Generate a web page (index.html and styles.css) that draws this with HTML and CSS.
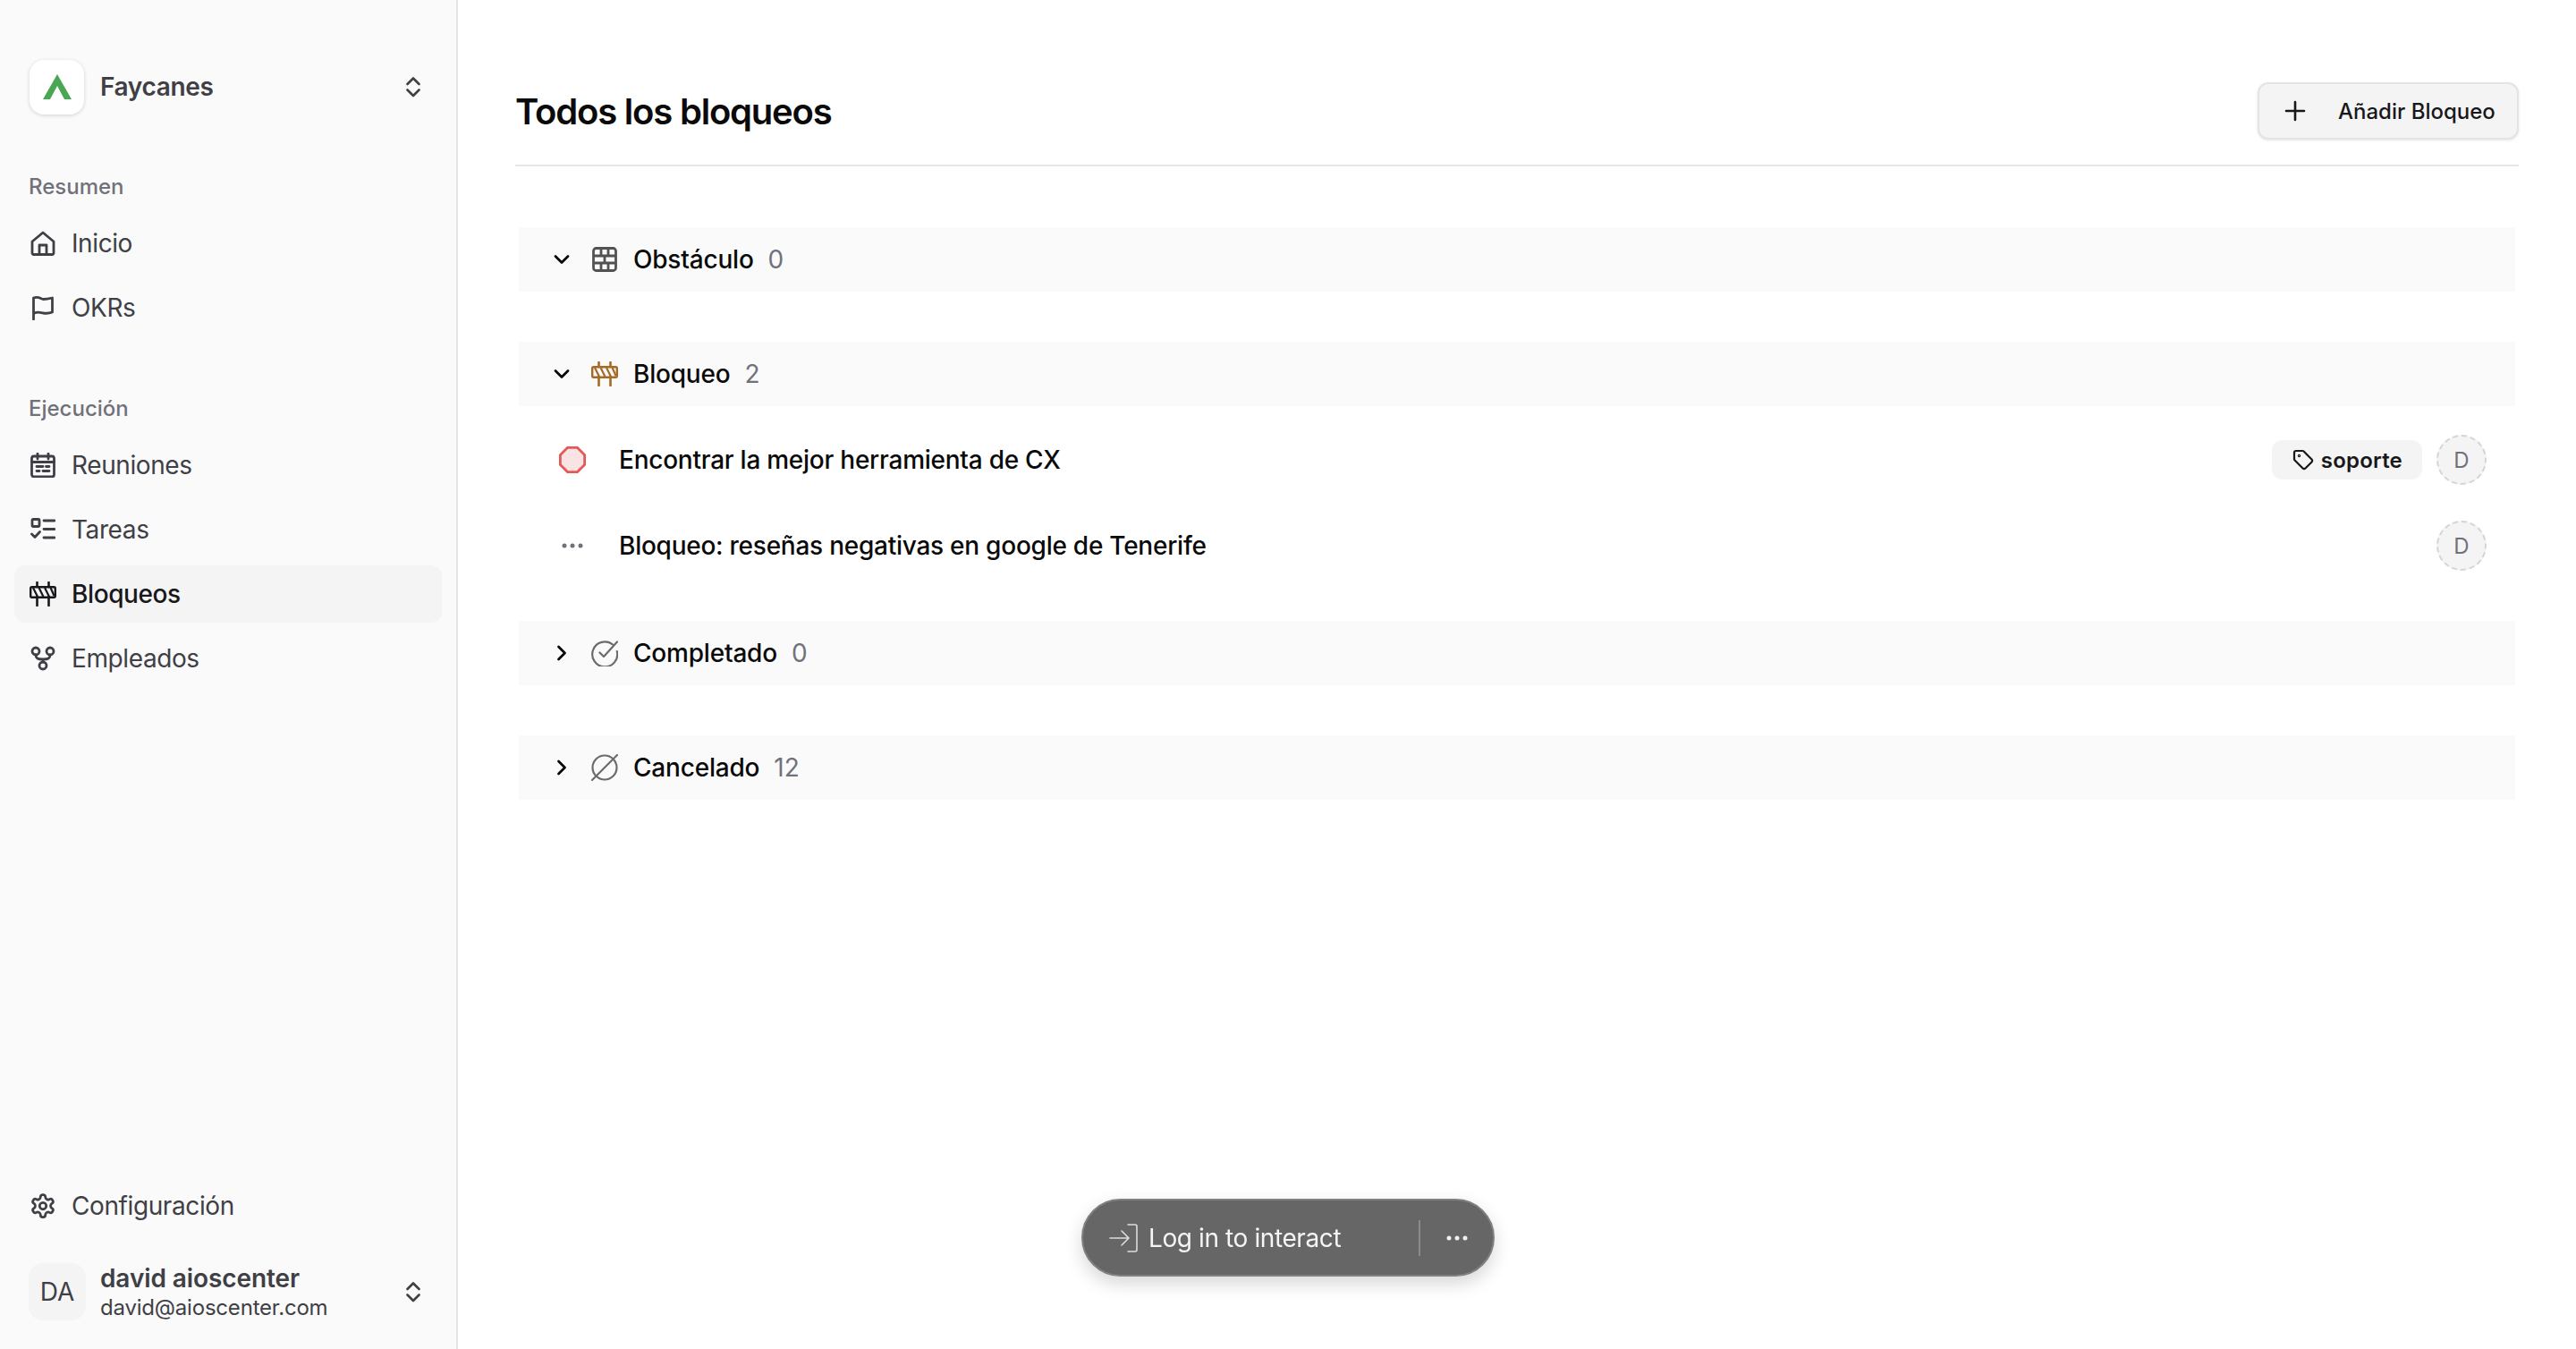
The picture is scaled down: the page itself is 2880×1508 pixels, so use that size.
FILE: index.html
```html
<!DOCTYPE html>
<html lang="es">
<head>
    <meta charset="UTF-8">
    <meta name="viewport" content="width=device-width, initial-scale=1.0">
    <title>Todos los bloqueos</title>
    <link rel="stylesheet" href="styles.css">
</head>
<body>
    <svg class="defs" width="0" height="0">
        <symbol id="i-updown" viewBox="0 0 16 24">
            <path d="M1.500 9 8 2.500 14.500 9M1.500 15.500 8 22l6.500-6.500" fill="none" stroke="currentColor" stroke-width="2.600" stroke-linecap="round" stroke-linejoin="round"/>
        </symbol>
        <symbol id="i-barrier" viewBox="0 0 30 28">
            <path d="M8.500 1v5M21.500 1v5M8.500 17v10M21.500 17v10" fill="none" stroke="currentColor" stroke-width="2.600" stroke-linecap="round"/>
            <rect x="1.200" y="6.200" width="27.600" height="11.600" rx="1.500" fill="none" stroke="currentColor" stroke-width="2.400"/>
            <path d="M4 7l5 10M10.500 7l5 10M17 7l5 10M23.500 7l4 9" fill="none" stroke="currentColor" stroke-width="2.200"/>
        </symbol>
        <symbol id="i-down" viewBox="0 0 18 18">
            <path d="M2 5.500 9 12.500 16 5.500" fill="none" stroke="currentColor" stroke-width="2.800" stroke-linecap="round" stroke-linejoin="round"/>
        </symbol>
        <symbol id="i-right" viewBox="0 0 18 18">
            <path d="M5.500 2 12.500 9 5.500 16" fill="none" stroke="currentColor" stroke-width="2.800" stroke-linecap="round" stroke-linejoin="round"/>
        </symbol>
        <symbol id="i-dots" viewBox="0 0 24 6">
            <circle cx="3" cy="3" r="2.500" fill="currentColor"/>
            <circle cx="12" cy="3" r="2.500" fill="currentColor"/>
            <circle cx="21" cy="3" r="2.500" fill="currentColor"/>
        </symbol>
    </svg>

    <aside class="sidebar">
        <div class="workspace">
            <div class="logo">
                <svg width="32" height="28" viewBox="0 0 32 28"><polygon points="16,0 32,28 24,28 16,13 8,28 0,28" fill="#4ba651"/></svg>
            </div>
            <span class="workspace-name">Faycanes</span>
            <svg class="updown" width="16" height="24"><use href="#i-updown"/></svg>
        </div>

        <p class="nav-label nav-label-first">Resumen</p>
        <nav class="nav">
            <a class="nav-item">
                <svg class="nav-icon" viewBox="0 0 28 28" fill="none" stroke="currentColor" stroke-width="2.800" stroke-linecap="round" stroke-linejoin="round"><path d="M2 12 14 2l12 10v13a1.500 1.500 0 0 1-1.500 1.500h-21A1.500 1.500 0 0 1 2 25z"/><path d="M10 26.500V16h8v10.500"/></svg>
                Inicio
            </a>
            <a class="nav-item">
                <svg class="nav-icon" viewBox="0 0 28 28" fill="none" stroke="currentColor" stroke-width="2.800" stroke-linecap="round" stroke-linejoin="round"><path d="M3.500 27V3c6-2.500 8 1.500 11 1.500 3.500 0 6-.5 10-1.500v16c-4 1.500-6.500 1.500-10 1-3.500-.5-6-2-11 .5"/></svg>
                OKRs
            </a>
        </nav>

        <p class="nav-label">Ejecución</p>
        <nav class="nav">
            <a class="nav-item">
                <svg class="nav-icon" viewBox="0 0 28 28" fill="none" stroke="currentColor" stroke-width="2.800" stroke-linecap="round" stroke-linejoin="round"><rect x="1.500" y="4" width="25" height="23" rx="2.500"/><path d="M8 1v6M20 1v6M1.500 10.500h25M7 15.500h7M17.500 15.500h3.500M7 20.500h3M14 20.500h7"/></svg>
                Reuniones
            </a>
            <a class="nav-item">
                <svg class="nav-icon" viewBox="0 0 28 28" fill="none" stroke="currentColor" stroke-width="2.800" stroke-linecap="round" stroke-linejoin="round"><rect x="2" y="2.500" width="8" height="8" rx="1"/><path d="M1.500 19 5 22.500 10.500 16.500M15 4h12M15 13.500h12M15 23h12"/></svg>
                Tareas
            </a>
            <a class="nav-item nav-item-active">
                <svg class="nav-icon nav-icon-wide" width="30" height="28"><use href="#i-barrier"/></svg>
                Bloqueos
            </a>
            <a class="nav-item">
                <svg class="nav-icon" viewBox="0 0 28 28" fill="none" stroke="currentColor" stroke-width="2.800" stroke-linecap="round" stroke-linejoin="round"><circle cx="6" cy="6" r="4"/><circle cx="22" cy="6" r="4"/><circle cx="14" cy="22" r="4"/><path d="M6 10c0 4 2 5 8 5s8-1 8-5M14 15v3"/></svg>
                Empleados
            </a>
        </nav>

        <div class="sidebar-bottom">
            <a class="nav-item">
                <svg class="nav-icon nav-icon-gear" viewBox="0 0 24 24" fill="none" stroke="currentColor" stroke-width="2.200" stroke-linecap="round" stroke-linejoin="round"><path d="M12.220 2h-.44a2 2 0 0 0-2 2v.18a2 2 0 0 1-1 1.730l-.43.25a2 2 0 0 1-2 0l-.15-.08a2 2 0 0 0-2.730.73l-.22.38a2 2 0 0 0 .73 2.730l.15.1a2 2 0 0 1 1 1.720v.51a2 2 0 0 1-1 1.740l-.15.09a2 2 0 0 0-.73 2.730l.22.38a2 2 0 0 0 2.730.73l.15-.08a2 2 0 0 1 2 0l.43.25a2 2 0 0 1 1 1.730V20a2 2 0 0 0 2 2h.44a2 2 0 0 0 2-2v-.18a2 2 0 0 1 1-1.730l.43-.25a2 2 0 0 1 2 0l.15.08a2 2 0 0 0 2.730-.73l.22-.39a2 2 0 0 0-.73-2.730l-.15-.08a2 2 0 0 1-1-1.740v-.5a2 2 0 0 1 1-1.740l.15-.09a2 2 0 0 0 .73-2.730l-.22-.38a2 2 0 0 0-2.730-.73l-.15.08a2 2 0 0 1-2 0l-.43-.25a2 2 0 0 1-1-1.730V4a2 2 0 0 0-2-2z"/><circle cx="12" cy="12" r="3"/></svg>
                Configuración
            </a>
            <div class="user">
                <div class="user-avatar">DA</div>
                <div class="user-text">
                    <span class="user-name">david aioscenter</span>
                    <span class="user-mail">david@aioscenter.com</span>
                </div>
                <svg class="updown" width="16" height="24"><use href="#i-updown"/></svg>
            </div>
        </div>
    </aside>

    <main class="main">
        <header class="page-header">
            <h1>Todos los bloqueos</h1>
            <button class="add-button">
                <svg width="24" height="24" viewBox="0 0 24 24" fill="none" stroke="currentColor" stroke-width="2.600" stroke-linecap="round"><path d="M12 2v20M2 12h20"/></svg>
                Añadir Bloqueo
            </button>
        </header>

        <section class="group">
            <div class="group-header">
                <svg class="chevron" width="18" height="18"><use href="#i-down"/></svg>
                <svg class="group-icon group-icon-brick" width="30" height="28" viewBox="0 0 30 28" fill="none" stroke="currentColor" stroke-width="2.800" stroke-linejoin="round"><rect x="2.500" y="1.500" width="25" height="25" rx="3"/><path d="M2.500 10h25M2.500 18h25M11 1.500V10M19 1.500V10M15 10v8M11 18v8.500M19 18v8.500"/></svg>
                <span class="group-name">Obstáculo</span>
                <span class="group-count">0</span>
            </div>
        </section>

        <section class="group group-open">
            <div class="group-header">
                <svg class="chevron" width="18" height="18"><use href="#i-down"/></svg>
                <svg class="group-icon group-icon-brown" width="30" height="28"><use href="#i-barrier"/></svg>
                <span class="group-name">Bloqueo</span>
                <span class="group-count">2</span>
            </div>
            <div class="rows">
                <div class="row">
                    <div class="row-status">
                        <svg width="30" height="30" viewBox="0 0 30 30"><polygon points="9.500,1.400 20.500,1.400 28.600,9.500 28.600,20.500 20.500,28.600 9.500,28.600 1.400,20.500 1.400,9.500" fill="#f9e3e3" stroke="#e5585a" stroke-width="2.800"/></svg>
                    </div>
                    <span class="row-title">Encontrar la mejor herramienta de CX</span>
                    <span class="tag">
                        <svg width="24" height="24" viewBox="0 0 24 24" fill="none" stroke="currentColor" stroke-width="2.200" stroke-linecap="round" stroke-linejoin="round"><path d="M12.586 2.586A2 2 0 0 0 11.172 2H4a2 2 0 0 0-2 2v7.172a2 2 0 0 0 .586 1.414l8.704 8.704a2.426 2.426 0 0 0 3.420 0l6.580-6.580a2.426 2.426 0 0 0 0-3.420z"/><circle cx="7.500" cy="7.500" r=".6"/></svg>
                        soporte
                    </span>
                    <span class="assignee">D</span>
                </div>
                <div class="row">
                    <div class="row-status row-status-dots">
                        <svg width="24" height="6"><use href="#i-dots"/></svg>
                    </div>
                    <span class="row-title">Bloqueo: reseñas negativas en google de Tenerife</span>
                    <span class="assignee">D</span>
                </div>
            </div>
        </section>

        <section class="group">
            <div class="group-header">
                <svg class="chevron" width="18" height="18"><use href="#i-right"/></svg>
                <svg class="group-icon group-icon-grey" width="30" height="30" viewBox="0 0 30 30" fill="none" stroke="currentColor" stroke-width="2.200" stroke-linecap="round" stroke-linejoin="round"><path d="M24 5.500A14 14 0 1 0 28.800 13M9.500 14.500l4.500 4.500L29 2.500"/></svg>
                <span class="group-name">Completado</span>
                <span class="group-count">0</span>
            </div>
        </section>

        <section class="group">
            <div class="group-header">
                <svg class="chevron" width="18" height="18"><use href="#i-right"/></svg>
                <svg class="group-icon group-icon-grey" width="30" height="30" viewBox="0 0 30 30" fill="none" stroke="currentColor" stroke-width="2.200" stroke-linecap="round"><circle cx="15" cy="15" r="13.500"/><path d="M1 29 29 1"/></svg>
                <span class="group-name">Cancelado</span>
                <span class="group-count">12</span>
            </div>
        </section>
    </main>

    <div class="login-pill">
        <svg class="login-icon" width="32" height="32" viewBox="0 0 32 32" fill="none" stroke="currentColor" stroke-width="1.600" stroke-linecap="round" stroke-linejoin="round"><path d="M1 16h21M14 8l8 8-8 8M21 1h8a2 2 0 0 1 2 2v26a2 2 0 0 1-2 2h-8"/></svg>
        <span class="login-text">Log in to interact</span>
        <span class="login-sep"></span>
        <svg class="login-dots" width="24" height="6"><use href="#i-dots"/></svg>
    </div>
</body>
</html>
```

FILE: styles.css
```css
* {
    box-sizing: border-box;
}

body {
    font-family: Inter, 'Liberation Sans', sans-serif;
    margin: 0;
    height: 100vh;
    display: flex;
    background-color: white;
    color: #0a0a0a;
    overflow: hidden;
}

.defs {
    display: none;
}

/* Sidebar */
.sidebar {
    width: 512px;
    flex-shrink: 0;
    display: flex;
    flex-direction: column;
    padding: 67px 16px 32px;
    background-color: #fafafa;
    border-right: 2px solid #e5e5e5;
}

.workspace {
    display: flex;
    align-items: center;
    height: 60px;
    padding-left: 17px;
}

.logo {
    width: 61px;
    height: 61px;
    display: flex;
    align-items: center;
    justify-content: center;
    background-color: white;
    border-radius: 16px;
    box-shadow: 0 1px 4px rgba(0, 0, 0, 0.16);
}

.workspace-name {
    margin-left: 18px;
    font-size: 28px;
    font-weight: 600;
    letter-spacing: -0.35px;
    color: #3f3f46;
}

.updown {
    margin-left: auto;
    margin-right: 24px;
    color: #3f3f46;
}

.nav-label {
    margin: 65px 0 15px 16px;
    height: 32px;
    line-height: 32px;
    font-size: 24px;
    font-weight: 500;
    color: #71717a;
}

.nav-label-first {
    margin-top: 66px;
}

.nav {
    display: flex;
    flex-direction: column;
    gap: 8px;
}

.nav-item {
    display: flex;
    align-items: center;
    gap: 18px;
    height: 64px;
    padding-left: 18px;
    border-radius: 12px;
    font-size: 28px;
    letter-spacing: -0.4px;
    color: #3f3f46;
}

.nav-item-active {
    background-color: #f4f4f5;
    color: #18181b;
    font-weight: 500;
}

.nav-icon {
    width: 28px;
    height: 28px;
    flex-shrink: 0;
}

.nav-icon-wide {
    width: 30px;
    margin-left: -1px;
    margin-right: -1px;
}

.nav-icon-gear {
    width: 30px;
    height: 30px;
    margin-left: -1px;
    margin-right: -1px;
}

.sidebar-bottom {
    margin-top: auto;
    display: flex;
    flex-direction: column;
    gap: 32px;
}

.user {
    display: flex;
    align-items: center;
    height: 64px;
    padding-left: 16px;
}

.user-avatar {
    width: 64px;
    height: 64px;
    display: flex;
    align-items: center;
    justify-content: center;
    background-color: #f4f4f5;
    border-radius: 16px;
    font-size: 28px;
    color: #3f3f46;
}

.user-text {
    display: flex;
    flex-direction: column;
    margin-left: 16px;
}

.user-name {
    font-size: 28px;
    line-height: 36px;
    font-weight: 600;
    letter-spacing: -0.1px;
    color: #3f3f46;
}

.user-mail {
    font-size: 24px;
    line-height: 30px;
    letter-spacing: -0.2px;
    color: #3f3f46;
}

/* Main */
.main {
    flex: 1;
    padding: 0 64px;
}

.page-header {
    display: flex;
    align-items: center;
    justify-content: space-between;
    padding: 92px 0 28px;
    border-bottom: 2px solid #e5e5e5;
    margin-bottom: 68px;
}

.page-header h1 {
    margin: 0;
    font-size: 40px;
    font-weight: 600;
    letter-spacing: -1.2px;
    color: #0a0a0a;
}

.add-button {
    display: flex;
    align-items: center;
    gap: 36px;
    width: 292px;
    height: 64px;
    padding: 0 0 0 28px;
    background-color: #f4f4f5;
    border: 2px solid #e4e4e7;
    border-radius: 12px;
    box-shadow: 0 1px 3px rgba(0, 0, 0, 0.1);
    font-family: inherit;
    font-size: 24px;
    font-weight: 500;
    color: #18181b;
}

.group {
    margin: 0 4px 56px;
}

.group-open {
    margin-bottom: 36px;
}

.group-header {
    display: flex;
    align-items: center;
    height: 72px;
    padding-left: 39px;
    background-color: #fafafa;
    font-size: 28px;
}

.chevron {
    flex-shrink: 0;
    color: #0a0a0a;
}

.group-icon {
    margin-left: 24px;
    flex-shrink: 0;
}

.group-icon-grey {
    color: #6b6b6b;
}

.group-icon-brick {
    color: #525252;
}

.group-icon-brown {
    color: #a66a24;
}

.group-name {
    margin-left: 17px;
    font-weight: 500;
    letter-spacing: -0.2px;
}

.group-count {
    margin-left: 16px;
    color: #71717a;
}

.rows {
    padding-top: 12px;
}

.row {
    display: flex;
    align-items: center;
    height: 96px;
    padding: 0 32px 0 45px;
    font-size: 28px;
    font-weight: 500;
    letter-spacing: -0.25px;
}

.row-status {
    width: 30px;
    display: flex;
    align-items: center;
    justify-content: center;
    margin-right: 37px;
}

.row-status-dots {
    color: #71717a;
}

.row-title {
    margin-right: auto;
}

.tag {
    display: flex;
    align-items: center;
    gap: 8px;
    height: 44px;
    margin-right: 16px;
    padding: 0 22px 0 23px;
    background-color: #f4f4f5;
    border-radius: 12px;
    font-size: 24px;
    font-weight: 600;
    letter-spacing: 0.2px;
    color: #18181b;
}

.assignee {
    width: 56px;
    height: 56px;
    display: flex;
    align-items: center;
    justify-content: center;
    background-color: #f4f4f5;
    border: 2px dashed #d4d4d8;
    border-radius: 50%;
    font-size: 24px;
    font-weight: 400;
    letter-spacing: 0;
    color: #71717a;
}

/* Floating login pill */
.login-pill {
    position: fixed;
    left: 50%;
    bottom: 81px;
    transform: translateX(-50%);
    width: 462px;
    height: 87px;
    display: flex;
    align-items: center;
    padding-left: 29px;
    background-color: #666666;
    border: 2px solid #808080;
    border-radius: 44px;
    box-shadow: 0 8px 20px rgba(0, 0, 0, 0.16);
    color: #f5f5f5;
}

.login-icon {
    flex-shrink: 0;
    color: #dddddd;
}

.login-text {
    margin-left: 12px;
    font-size: 28px;
    letter-spacing: -0.4px;
}

.login-sep {
    width: 2px;
    height: 40px;
    margin-left: 87px;
    background-color: #8a8a8a;
}

.login-dots {
    margin-left: 29px;
    color: #f0f0f0;
}
```
